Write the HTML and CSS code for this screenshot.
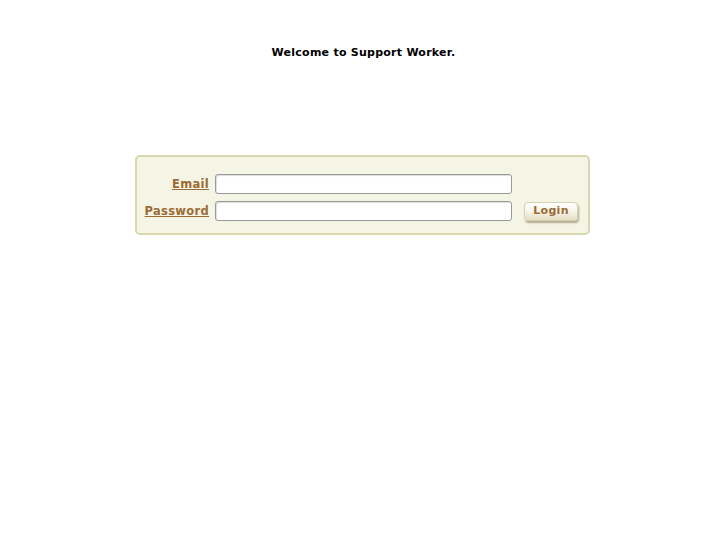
FILE: index.html
```html
<!DOCTYPE html>
<html>
<head>
<meta charset="utf-8">
<link rel="stylesheet" href="styles.css">
</head>
<body>
<h1 class="title">Welcome to Support Worker.</h1>
<form class="login-box">
  <label class="label" for="email">Email</label>
  <input class="field" id="email" type="text">
  <span></span>
  <label class="label" for="password">Password</label>
  <input class="field" id="password" type="password">
  <button class="btn" type="button">Login</button>
</form>
</body>
</html>
```
FILE: styles.css
```css
html, body {
  margin: 0;
  padding: 0;
  background: #fff;
  font-family: "DejaVu Sans", sans-serif;
  font-size: 11px;
}
.title {
  margin: 46px 0 0;
  font-size: 11px;
  line-height: 14px;
  letter-spacing: 0.25px;
  font-weight: bold;
  text-align: center;
  color: #000;
}
.login-box {
  box-sizing: border-box;
  width: 455px;
  margin: 95px 0 0 calc(50% - 228.5px);
  border: 2px solid #d8d8ae;
  border-radius: 5px;
  background: #f5f5e5;
  padding: 17px 10px 12px 0;
  display: grid;
  grid-template-columns: 72px 297px 54px;
  column-gap: 6px;
  row-gap: 7px;
  align-items: center;
}
.label {
  text-align: right;
  font-weight: bold;
  font-size: 11.5px;
  letter-spacing: 0.3px;
  color: #9c6a35;
  text-decoration: underline;
  line-height: 14px;
}
.field {
  box-sizing: border-box;
  height: 20px;
  width: 297px;
  margin: 0;
  border: 1px solid #9a9a9a;
  border-radius: 3px;
  background: #fff;
  box-shadow: inset 1px 1px 1px #ddd;
  padding: 1px 3px;
  font-family: "DejaVu Sans", sans-serif;
  font-size: 11px;
}
.btn {
  box-sizing: border-box;
  margin-left: 6px;
  width: 54px;
  height: 19px;
  padding: 0;
  border: 1px solid #d6cfb0;
  border-radius: 4px;
  background: linear-gradient(#ffffff, #f6f3e6 55%, #e4ddc4);
  box-shadow: 1px 2px 2px rgba(120, 110, 80, 0.55);
  color: #9c6a35;
  font-family: "DejaVu Sans", sans-serif;
  font-weight: bold;
  font-size: 11px;
  letter-spacing: 0.3px;
  line-height: 16px;
}
```
